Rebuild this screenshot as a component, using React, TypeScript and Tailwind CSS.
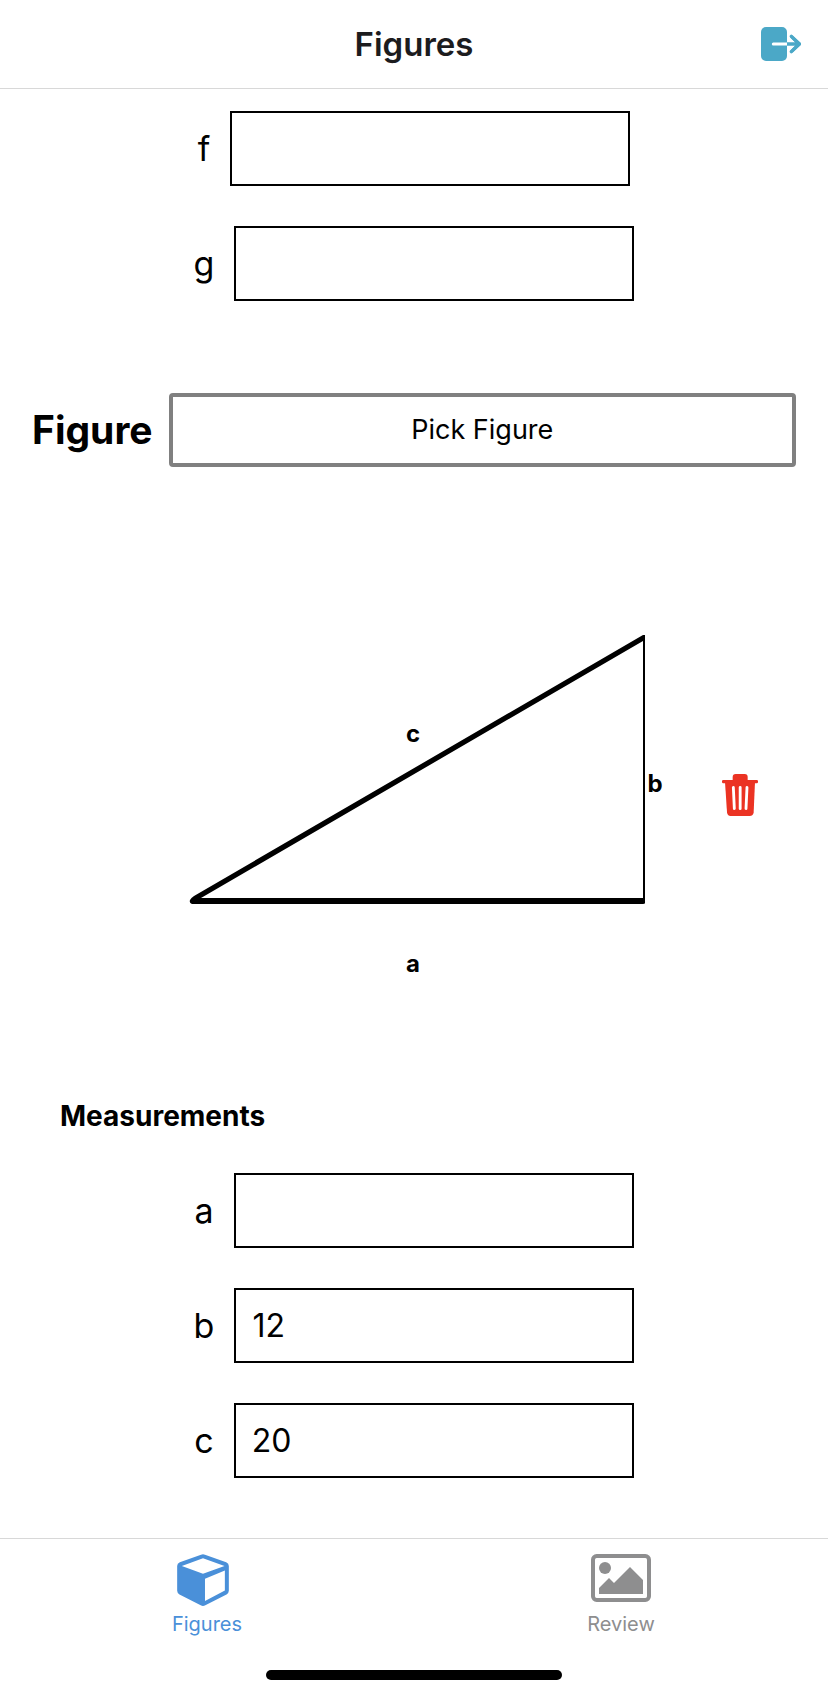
import { useState } from "react";

function ExitIcon() {
  return (
    <svg viewBox="0 0 120 102" className="h-[34px] w-10" fill="none" aria-hidden="true">
      <rect width="78" height="102" rx="15" fill="#4ba8c7" />
      <path d="M37 51H78" stroke="#fff" strokeWidth="9" strokeLinecap="round" />
      <path d="M78 51H114M91 28L115 51L91 74" stroke="#4ba8c7" strokeWidth="10" strokeLinejoin="round" />
      <path d="M91 28L115 51L91 74" stroke="#4ba8c7" strokeWidth="10" strokeLinecap="round" strokeLinejoin="round" />
    </svg>
  );
}

function TrashIcon() {
  return (
    <svg viewBox="0 0 108 126" className="h-[42px] w-9" aria-hidden="true">
      <g fill="#eb3323">
        <path d="M32 24V9Q32 0 41 0H68Q77 0 77 9V24Z" />
        <rect y="18" width="108" height="10" rx="4" />
        <path d="M9 24H99L95 115Q94 126 83 126H26Q16 126 15 115Z" />
      </g>
      <path d="M34 40L37 104M54.500 40V104M75 40L72 104" stroke="#fff" strokeWidth="8.500" strokeLinecap="round" fill="none" />
    </svg>
  );
}

function CubeIcon() {
  return (
    <svg viewBox="0 0 156 157" className="size-[52px]" fill="#4a90d9" aria-hidden="true">
      <path
        fillRule="evenodd"
        d="M72 2Q78 -1 84 2L148 25Q156 28 156 36V111Q156 118 149 122L85 155Q78 159 71 155L7 122Q0 118 0 111V36Q0 28 8 25ZM14 36L78 60L143 36L78 13ZM84 75V142L144 110V50Z"
      />
    </svg>
  );
}

function PictureIcon() {
  return (
    <svg viewBox="0 0 180 144" className="h-12 w-[60px]" fill="#8e8e8f" aria-hidden="true">
      <rect x="6" y="6" width="168" height="132" rx="11" fill="none" stroke="#8e8e8f" strokeWidth="12" />
      <circle cx="42" cy="42" r="18" />
      <path d="M24 120V102L54 72L69 87L117 39L156 78V120Z" />
    </svg>
  );
}

function Field({ id, name, initial = "" }: { id: string; name: string; initial?: string }) {
  const [value, setValue] = useState(initial);
  return (
    <div className="flex items-center justify-center gap-5">
      <label htmlFor={id} className="text-[34px] leading-10">
        {name}
      </label>
      <input
        id={id}
        type="text"
        inputMode="decimal"
        value={value}
        onChange={(e) => setValue(e.target.value)}
        className="h-[75px] w-[400px] border-2 border-black bg-white px-4 text-[32px]"
      />
    </div>
  );
}

function Triangle() {
  return (
    <svg viewBox="0 0 500 366" className="w-[500px]" role="img" aria-label="Right triangle with sides a, b and c">
      <path
        fillRule="evenodd"
        d="M479 23H481V291Q481 292 479 292H28Q25 291 26 288Q27 286 30 284ZM479 29L37 286H479Z"
      />
      <g className="text-2xl font-bold">
        <text x="249" y="130" textAnchor="middle">c</text>
        <text x="491" y="180" textAnchor="middle">b</text>
        <text x="249" y="360" textAnchor="middle">a</text>
      </g>
    </svg>
  );
}

export default function App() {
  return (
    <div className="flex min-h-screen flex-col bg-white font-['Inter',sans-serif] text-black">
      <header className="grid h-[89px] grid-cols-[1fr_auto_1fr] items-center border-b border-[#d8d8d8] px-[27px]">
        <h1 className="col-start-2 text-[33px] leading-10 font-semibold text-[#1c1c1e]">Figures</h1>
        <button type="button" aria-label="Sign out" className="justify-self-end">
          <ExitIcon />
        </button>
      </header>

      <main className="flex flex-1 flex-col pt-[22px] pb-15">
        <div className="flex flex-col gap-10">
          <Field id="first-f" name="f" />
          <Field id="first-g" name="g" />
        </div>

        <section className="mt-[92px] flex items-center gap-4 px-8">
          <h2 className="text-[39px] leading-10 font-bold">Figure</h2>
          <button type="button" className="h-[74px] flex-1 rounded border-4 border-[#808080] text-[27px]">
            Pick Figure
          </button>
        </section>

        <section className="mt-[145px] grid grid-cols-[1fr_auto_1fr] items-center">
          <div className="col-start-2">
            <Triangle />
          </div>
          <button type="button" aria-label="Delete figure" className="ml-[58px] justify-self-start">
            <TrashIcon />
          </button>
        </section>

        <section className="mt-[118px]">
          <h3 className="px-15 text-[28px] leading-10 font-bold">Measurements</h3>
          <div className="mt-[37px] flex flex-col gap-10">
            <Field id="second-a" name="a" />
            <Field id="second-b" name="b" initial="12" />
            <Field id="second-c" name="c" initial="20" />
          </div>
        </section>
      </main>

      <nav className="border-t border-[#d8d8d8] pb-4">
        <div className="grid h-[131px] grid-cols-2 items-start pt-[15px] text-xl leading-6">
          <a href="#figures" aria-current="page" className="flex flex-col items-center text-[#4a90d9]">
            <span className="flex h-[58px] w-[60px] items-start">
              <CubeIcon />
            </span>
            Figures
          </a>
          <a href="#review" className="flex flex-col items-center text-[#8e8e8f]">
            <span className="flex h-[58px] w-[60px] items-start">
              <PictureIcon />
            </span>
            Review
          </a>
        </div>
        <div className="mx-auto h-[10px] w-[296px] rounded-full bg-black" />
      </nav>
    </div>
  );
}
